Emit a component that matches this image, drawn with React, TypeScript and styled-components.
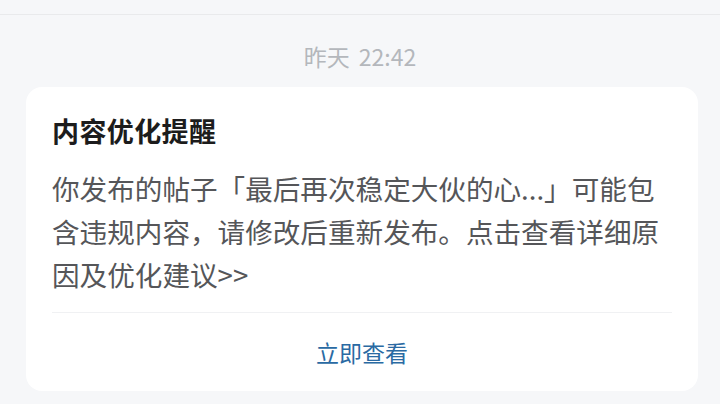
import React from "react";
import styled, { createGlobalStyle } from "styled-components";

const GlobalStyle = createGlobalStyle`
  html, body {
    margin: 0;
    padding: 0;
    background: #f6f7f9;
  }
  body {
    font-family: "Noto Sans CJK SC", "Noto Sans", sans-serif;
    -webkit-font-smoothing: antialiased;
  }
`;

const Page = styled.div`
  width: 720px;
  height: 404px;
  overflow: hidden;
  background: #f6f7f9;
`;

const TopBar = styled.div`
  height: 14px;
  border-bottom: 1px solid #e9eaec;
`;

const Time = styled.div`
  margin-top: 25px;
  height: 32px;
  line-height: 32px;
  text-align: center;
  font-size: 23px;
  color: #b4b7bc;
  word-spacing: 4px;
`;

const Card = styled.div`
  margin: 15px 22px 0 26px;
  background: #fff;
  border-radius: 16px;
  padding: 26px 26px 0 26px;
`;

const Title = styled.h3`
  margin: 0;
  font-size: 27px;
  line-height: 36px;
  font-weight: 700;
  color: #1c1c1c;
  letter-spacing: 0.4px;
`;

const Body = styled.p`
  margin: 18px 0 0 0;
  font-size: 27.6px;
  line-height: 43px;
  color: #555659;
`;

const Divider = styled.hr`
  margin: 16px 0 0 0;
  border: none;
  height: 1px;
  background: #f0f1f3;
`;

const Action = styled.button`
  display: block;
  width: 100%;
  height: 78px;
  border: none;
  background: transparent;
  padding: 0;
  font-family: inherit;
  font-size: 23px;
  font-weight: 400;
  color: #2a6aa3;
  cursor: pointer;
`;

export default function App() {
  return (
    <Page>
      <GlobalStyle />
      <TopBar />
      <Time>昨天 22:42</Time>
      <Card>
        <Title>内容优化提醒</Title>
        <Body>
          你发布的帖子「最后再次稳定大伙的心...」可能包含违规内容，请修改后重新发布。点击查看详细原因及优化建议&gt;&gt;
        </Body>
        <Divider />
        <Action>立即查看</Action>
      </Card>
    </Page>
  );
}
